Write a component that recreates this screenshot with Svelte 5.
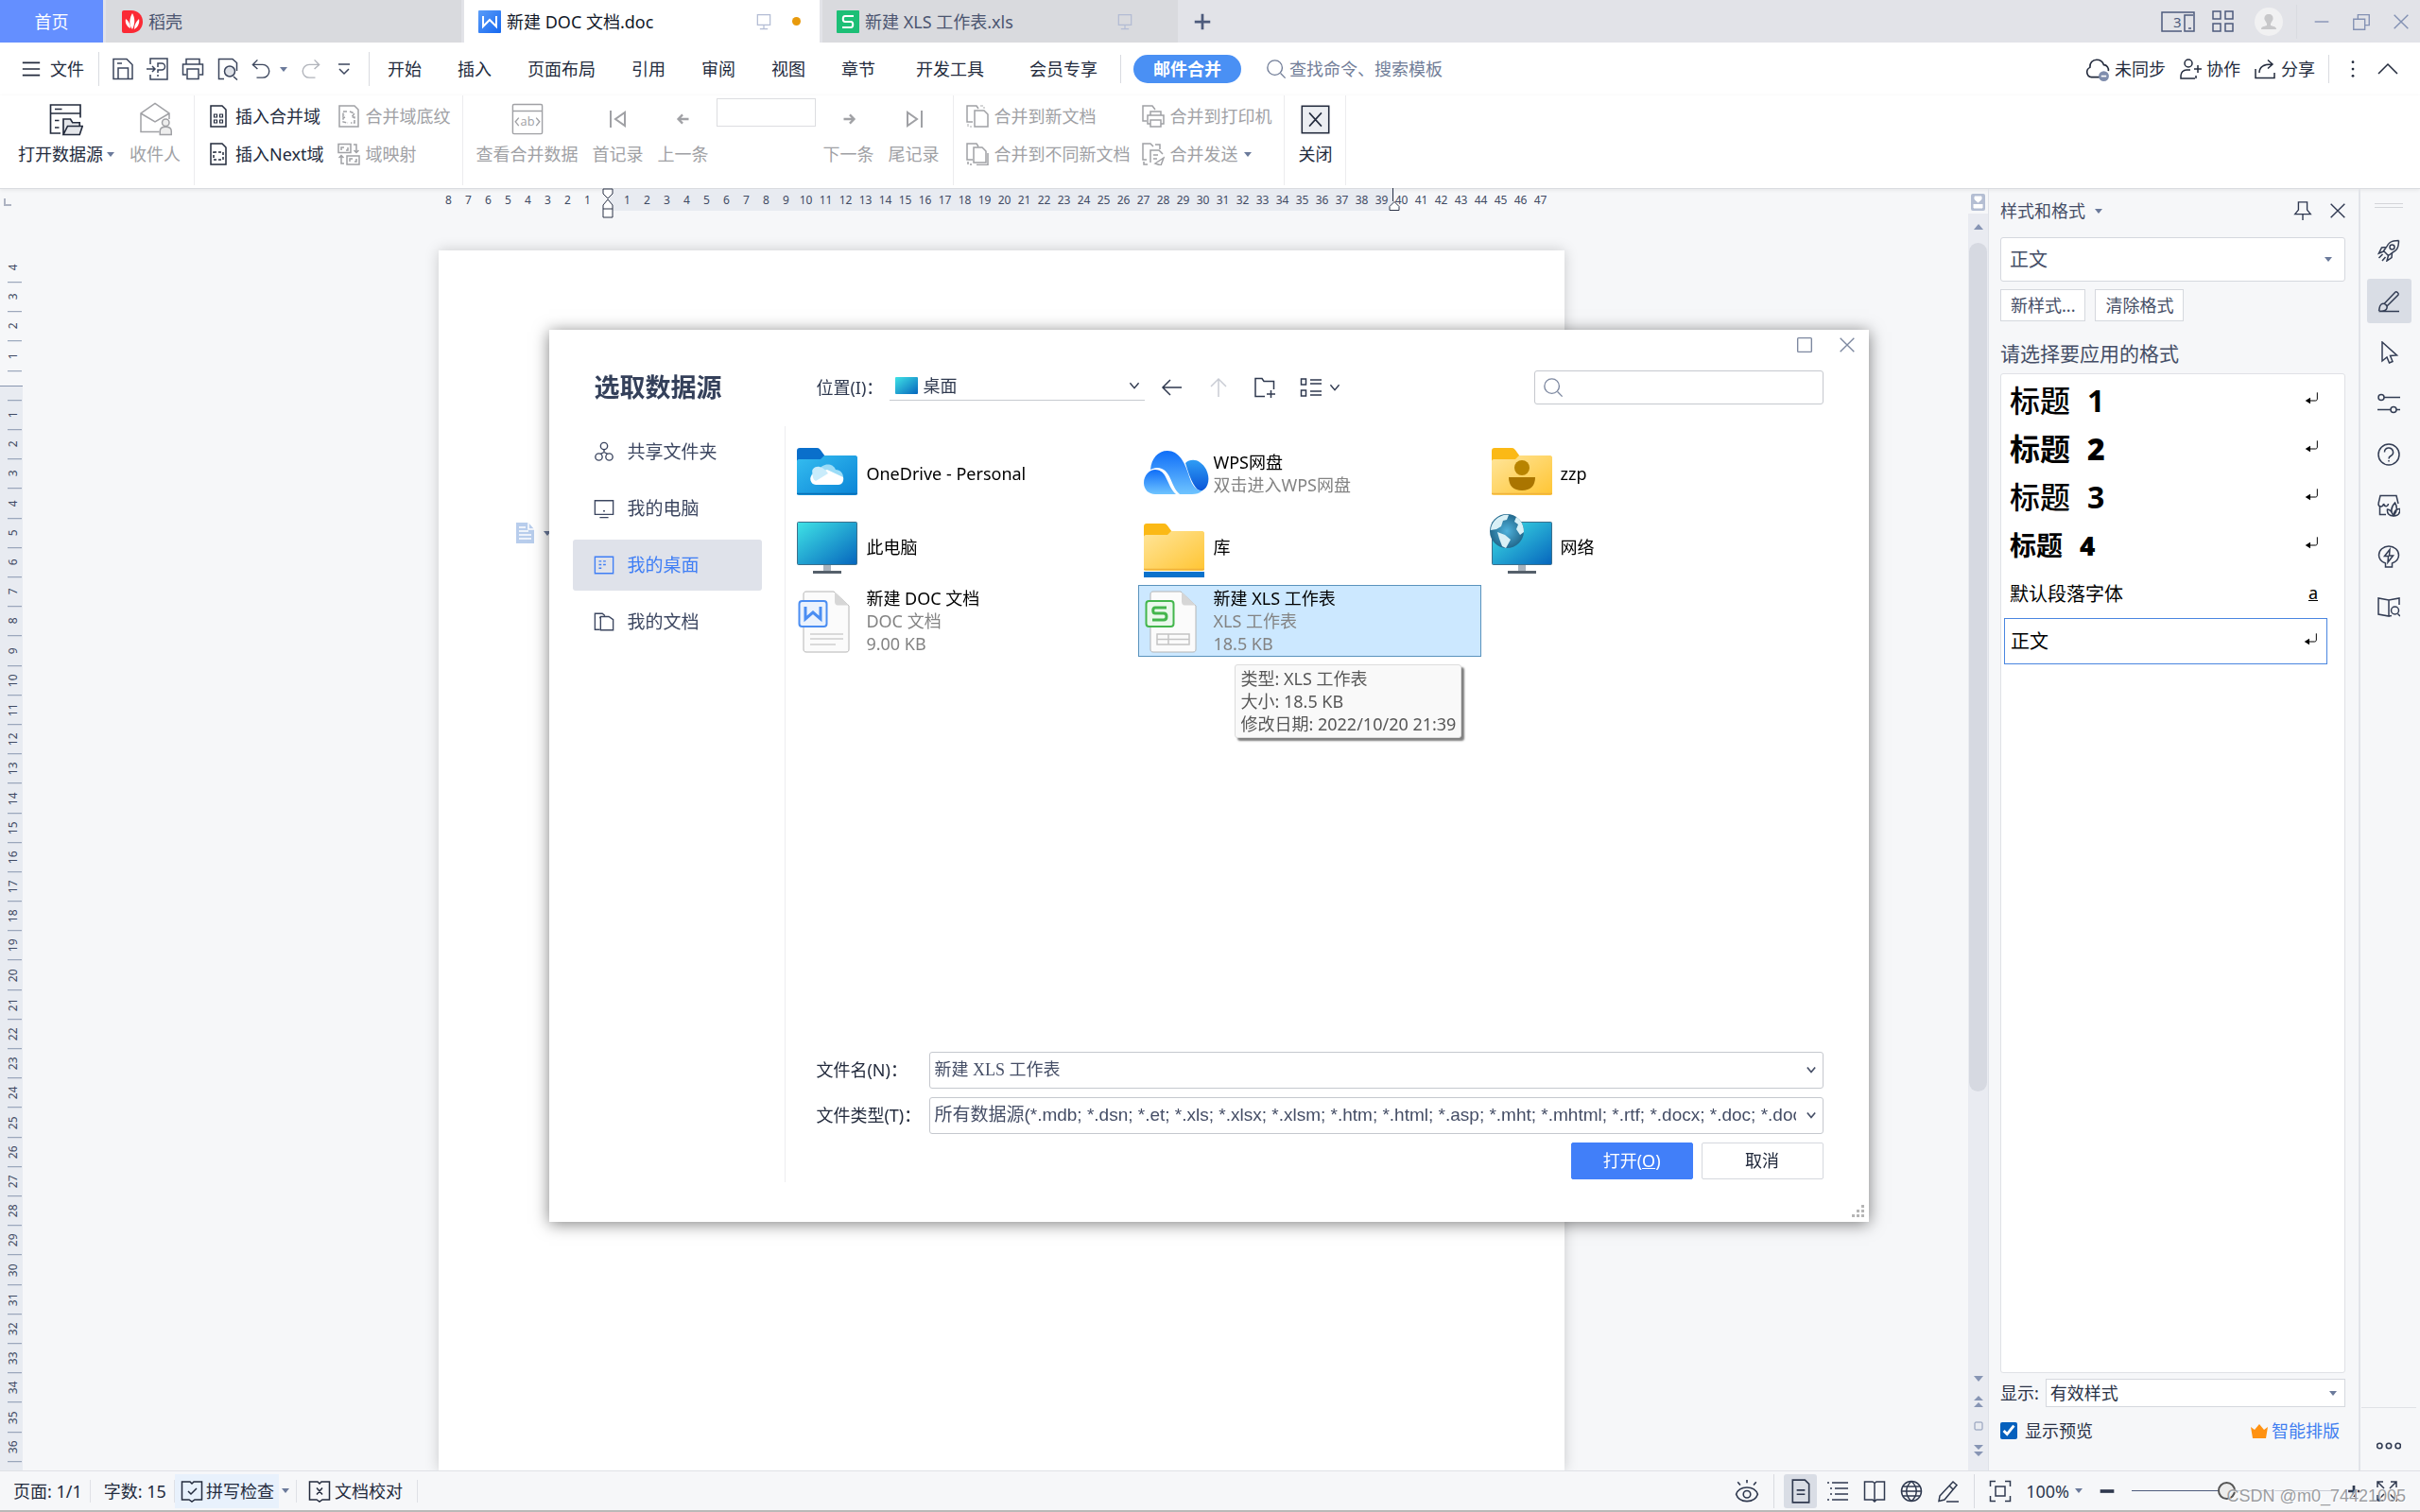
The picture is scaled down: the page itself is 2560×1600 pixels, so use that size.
<script lang="ts">
	type FileItem = {
		name: string;
		icon: string;
		lines?: string[];
		selected?: boolean;
	};

	const leftNav = ['开始', '插入', '页面布局', '引用', '审阅', '视图', '章节'];
	const wideNav = ['开发工具', '会员专享'];

	const hTicks = Array.from({ length: 56 }, (_, i) => i - 8);
	const vTicks = Array.from({ length: 41 }, (_, i) => i - 4);

	const places = [
		{ label: '共享文件夹', icon: 'share3' },
		{ label: '我的电脑', icon: 'monitor' },
		{ label: '我的桌面', icon: 'desktop' },
		{ label: '我的文档', icon: 'docs' }
	];
	let place = $state('我的桌面');

	const files: FileItem[] = [
		{ name: 'OneDrive - Personal', icon: 'onedrive' },
		{ name: 'WPS网盘', icon: 'wps', lines: ['双击进入WPS网盘'] },
		{ name: 'zzp', icon: 'user' },
		{ name: '此电脑', icon: 'pc' },
		{ name: '库', icon: 'library' },
		{ name: '网络', icon: 'network' },
		{ name: '新建 DOC 文档', icon: 'doc', lines: ['DOC 文档', '9.00 KB'] },
		{ name: '新建 XLS 工作表', icon: 'xls', lines: ['XLS 工作表', '18.5 KB'], selected: true }
	];

	const styles = [
		{ label: '标题', num: '1', cls: 'h1' },
		{ label: '标题', num: '2', cls: 'h2' },
		{ label: '标题', num: '3', cls: 'h3' },
		{ label: '标题', num: '4', cls: 'h4' },
		{ label: '默认段落字体', num: '', cls: 'plain' },
		{ label: '正文', num: '', cls: 'plain current' }
	];

	const rail = ['rocket', 'brush', 'cursor', 'sliders', 'help', 'store', 'bulb', 'bookfind'];

	let fileName = $state('新建 XLS 工作表');
	let preview = $state(true);
	let zoom = $state(47);

	const page = '<path d="M4 1h12l4 4v18H4z"/>';

	const icons: Record<string, string> = {
		menu: '<path d="M1 4h22M1 12h22M1 20h22"/>',
		save: '<path d="M2 1.500h14l6 6v15H2zM7 22V11h10.500v11M6 6h5"/>',
		export: '<path d="M4 7V1h18v22H4v-5M0 12h9M6 9l3 3-3 3M12 16v-3h4a3.500 3.500 0 0 0 0-7h-4v4M12 18v2"/>',
		print: '<path d="M5 7V1.500h14V7M5 18H1.500V7h21v11H19M6 12h12v10.500H6z"/>',
		preview: '<path d="M8 22.500H2.500v-21H17l4.500 4V14M18 20l4 3.500"/><circle cx="14" cy="14.500" r="5.500" fill="#dfe2e8"/>',
		undo: '<path d="M7 1.500L1.500 7 7 12M2 7h11a7.500 7.500 0 0 1 0 15H6"/>',
		redo: '<path d="M17 1.500L22.500 7 17 12M22 7H11a7.500 7.500 0 0 0 0 15h7"/>',
		more: '<path d="M6 7h12M7 12l5 5 5-5"/>',
		search: '<circle cx="10.500" cy="10.500" r="8.500"/><path d="M17 17l5.500 5.500"/>',
		cloud: '<path d="M14 20H6a5 5 0 0 1-1.500-9.500C4 6 7 3 11 3c4 0 6 2 7 5 3 0 5 3 4.500 6"/><circle cx="18" cy="19" r="5" fill="#7f8dad" stroke="none"/><path d="M15.500 19h5" stroke="#fff"/>',
		person: '<circle cx="10" cy="6" r="4"/><path d="M17 22H2v-3a6 6 0 0 1 6-6h4M18 22v-3M20 8v8M16 12h8"/>',
		share: '<path d="M2 12v9.500h20V16M6 16c0-6 4-9 13-9M15 2.500L20 7l-5 4.500"/>',
		dots: '<g fill="currentColor" stroke="none"><circle cx="12" cy="4" r="1.500"/><circle cx="12" cy="12" r="1.500"/><circle cx="12" cy="20" r="1.500"/></g>',
		up: '<path d="M2 17L12 7l10 10"/>',
		chevron: '<path d="M7 9l5 6 5-6"/>',
		close: '<path d="M4 4l16 16M20 4L4 20"/>',
		min: '<path d="M4 12h16"/>',
		restore: '<path d="M3 9h13v12H3zM8 9V4h13v12h-5"/>',
		max: '<rect x="4" y="4" width="16" height="16" rx="1"/>',
		present: '<path d="M4 3h16v13H4zM12 16v5M7 21h10"/>',
		grid: '<path d="M1 1h8v8H1zM14 1h8v8h-8zM1 14h8v8H1zM14 14h8v8h-8z"/>',
		plus: '<path d="M12 3v18M3 12h18"/>',
		datasource: '<path d="M8 22H1V2h21v9M1 8h21M4 5h5M4 13h3M4 18h3"/><path d="M10 23V12h5l1.500 2.500h5V17M10 23l3-6h10.500l-2 6z" fill="#e4e6ea"/>',
		recipient: '<path d="M15 21H2V8l10-7 10 7v4M2 8l10 6 10-6"/><circle cx="19.500" cy="14.500" r="2.500" fill="#eee"/><path d="M15.500 23v-2.500c0-2 1.500-3 4-3s4 1 4 3V23z" fill="#eee"/>',
		mergefield: page + '<path d="M7.500 10h3v3h-3zM13.500 10h3v3h-3zM7.500 16h3v3h-3zM13.500 16h3v3h-3z" stroke-width="1.200"/>',
		nextfield: page + '<path d="M7 10h10v8H7z" stroke-dasharray="3 2"/>',
		shading: '<path d="M2 1h16l4 4v18H2z"/><path d="M10 7H6v5l2-1M8 13l-2 1v4l5 1M13 7l5 2-3 4h3v6h-4" stroke-dasharray="4 1.500"/>',
		mapping: '<path d="M1 1.500h13v9H1zM4 8V5h3M9 8h2V5M10 14h13v9H10zM13 20v-3h3M18 20h2v-3M17 2h3v8M17.500 8l2.500 2.500L22.500 8M7 22H4v-8M1.500 16L4 13.500 6.500 16"/>',
		viewdata: '<rect x="1" y="1" width="22" height="22" rx="1"/><path d="M1 6h22"/><path d="M5.500 11L3 14l2.500 3M18.500 11l2.500 3-2.500 3" stroke-width="1"/><text x="12" y="17" font-size="9" text-anchor="middle" font-family="Open Sans" fill="currentColor" stroke="none">ab</text>',
		first: '<path d="M4 3v18M19 5v14L9 12z"/>',
		last: '<path d="M20 3v18M5 5v14l10-7z"/>',
		prev: '<path d="M18 12H7M11 7l-5 5 5 5" stroke-width="2.500"/>',
		next: '<path d="M6 12h11M13 7l5 5-5 5" stroke-width="2.500"/>',
		mergedoc: '<path d="M7 18H1V1h10l2 3M9 6h10l4 4v13H9z"/><path d="M15 1h4v3M2 20v3h4" stroke-dasharray="3 2" opacity=".6"/>',
		mergediff: '<path d="M7 18H1V1h10l2 3M8 5h9l4 4v12H8zM23 11v12.500H11"/><path d="M2 20v3h4" stroke-dasharray="3 2"/>',
		mergeprint: '<path d="M5 17H1V1h10l3 4M9 11V7h11v4M9 20H6v-9h17v9h-3M9 16h11v7H9z"/>',
		mergesend: '<path d="M5 18H1V1h8l3 3M14 2h5v5M9 21V8h9l4 4M2 20v3h4M12 13h5M12 17h4M14 22l9-6-3 8z"/>',
		closebox: '<rect x="1" y="1" width="22" height="22" fill="#eceef2"/><path d="M7 6.500l10 11M17 6.500l-10 11"/>',
		pin: '<path d="M7 2h10v9l4 5H3l4-5zM12 16v7"/>',
		rocket: '<path d="M22.500 1.500c-9 0-11 3-13 7l-5 .500-3 6 5-2M9.500 8.500l-3 4 5 5 4-3M22.500 1.500c0 9-3 11-7 13l-.500 5-5 3.500 1.500-5.500M5.500 16l-4 4M8.500 19l-3.500 4"/><circle cx="15.500" cy="8.500" r="2.500"/>',
		brush: '<path d="M1.500 22.500H23M1.500 22c1-3 0-5 2.500-7 3-2 7 1 6 4s-5 3.500-8.500 3M7.500 14L19 2c1-1 4 1.500 3 3L10 17"/>',
		cursor: '<path d="M5 1v20l5-4 2.500 6 3.500-1.500-2.500-6 7-.500z"/>',
		sliders: '<circle cx="4" cy="5.500" r="3"/><path d="M7 5.500h17M0 18.500h14M20 18.500h4"/><circle cx="17" cy="18.500" r="3"/>',
		help: '<circle cx="12" cy="12" r="11"/><path d="M7.500 9.500a4.500 4.500 0 1 1 6.500 4c-1.500.800-2 1.300-2 3M12 18v1.500"/>',
		store: '<path d="M2.500 13v8.500H9M1 10l2-8.500h17l2 8.500M1 10c0 4 5 4 5.500 0 1 3.500 4.500 3.500 5 0M17 23c-3-4-3-9 1.500-14 3 5 2 10-1.500 14zM17 23c-5 0-7-3-6.500-7 3 0 5 3 6.500 7zM17 23c0-5 3-8 7-7.500 0 5-3 7.500-7 7.500z"/>',
		bulb: '<path d="M8.500 19v4h7v-4c4-1.500 7-4.500 7-8.500a10.500 9.500 0 0 0-21 0c0 4 3 7 7 8.500zM13 4.500l-5.500 7h4L11 18l5.500-7h-4z"/>',
		bookfind: '<path d="M12 4v17L1 19V2l11 2 11-2v7M12 21l3-.500"/><circle cx="18.500" cy="15" r="4"/><path d="M21.500 18.500L24 21"/>',
		share3: '<circle cx="12" cy="5.500" r="4"/><circle cx="6" cy="18" r="4"/><circle cx="18" cy="18" r="4"/><path d="M12 9.500v3M8 14.500l4-2 4 2"/>',
		monitor: '<path d="M1.500 3h21v16h-21zM7 22.500h10M11 15h2"/>',
		desktop: '<path d="M1.500 2.500h21v19h-21zM6 7.500h3M11 7.500h3M6 11.500h3M11 11.500h3M6 15.500h3"/>',
		docs: '<path d="M7 21H1.500V2.500H10L13 5M8 6h7.500v0h2l5 3.500v12H8zM8 6l-1 2"/>',
		back: '<path d="M22 12H3M10 4l-8 8 8 8"/>',
		arrowup: '<path d="M12 22V3M4 11l8-8 8 8"/>',
		newfolder: '<path d="M12 21.500H2v-19h7l2 3h10.500V14M14 19h9M18.500 15v8"/>',
		view: '<path d="M1.500 3h5v6h-5zM1.500 15h5v6h-5zM11 4h12M11 8h12M11 16h12M11 20h12"/>',
		spell: '<path d="M1.500 2H10l2 2 2-2h8.500v19H15l-3 2-3-2H1.500zM8 12l3 3 6-6"/>',
		proof: '<path d="M1.500 2H10l2 2 2-2h8.500v19H15l-3 2-3-2H1.500zM9 8.500l6 7M15 8.500l-6 7"/>',
		eye: '<path d="M1.500 15c3-9 18-9 21 0-3 9-18 9-21 0zM12 1v3M3 3l2.500 3M21 3l-2.500 3"/><circle cx="12" cy="15" r="3.500"/>',
		pageview: page + '<path d="M8 11h8M8 15h8"/>',
		outline: '<path d="M1 3h2M6 3h17M4 9h2M9 9h14M4 15h2M9 15h14M1 21h2M6 21h17"/>',
		book: '<path d="M12 3.500V23M12 3.500L10 2H1.500v19H10l2 2 2-2h8.500V2H14z"/>',
		globe: '<circle cx="12" cy="12" r="10.500"/><path d="M1.500 12h21M3 7h18M3 17h18M12 1.500c-7 6-7 15 0 21M12 1.500c7 6 7 15 0 21"/>',
		pen: '<path d="M3 17L17 2l4 3.500L8 21l-6 1.500zM13 6l4 4M10 23h13"/>',
		fit: '<path d="M1.500 7V1.500H7M17 1.500h5.500V7M22.500 17v5.500H17M7 22.500H1.500V17M7 7h10v10H7z"/>',
		full: '<path d="M2 8V2h6M16 2h6v6M22 16v6h-6M8 22H2v-6M2 2l7 7M22 2l-7 7M22 22l-7-7M2 22l7-7"/>',
		return: '<path d="M20 2v10c0 2-1 3-3 3H6" stroke-width="1.500"/><path d="M1 15l8-5v10z" fill="currentColor" stroke="none"/>',
		rdots: '<circle cx="3" cy="12" r="2.500"/><circle cx="12" cy="12" r="2.500"/><circle cx="21" cy="12" r="2.500"/>'
	};

	const folder = (c: string) =>
		`<path d="M0 8a3 3 0 0 1 3-3h18c3 0 4 2 6 5l3 4v8H0z" fill="${c === 'blue' ? '#0a6fcb' : '#fbb916'}"/>` +
		`<path d="M0 19c0-1 1-2 2-2h23l4-4h33c1 0 2 1 2 2v38c0 1-1 2-2 2H2c-1 0-2-1-2-2z" fill="url(#${c})"/>` +
		`<path d="M0 53.500h64" stroke="${c === 'blue' ? '#0a6fb5' : '#f0b23c'}" stroke-width="1.500"/>`;
	const pc =
		'<path d="M28 51h8v8h-8z" fill="#a9b3bd"/><path d="M17 57h30v3H17z" fill="#55606b"/>' +
		'<rect x=".5" y="5.500" width="63" height="45" rx="1" fill="url(#screen)" stroke="#3b6f8c"/>';
	const sheet =
		'<path d="M10 1h29l16 15v46c0 2-1 3-3 3H10c-2 0-3-1-3-3V4c0-2 1-3 3-3z" fill="#fbfbfb" stroke="#b4b4b4"/>' +
		'<path d="M40 1.500v10c0 2 1 4 3 4h12z" fill="#d6d6d6"/>';

	const art: Record<string, string> = {
		onedrive:
			folder('blue') +
			'<path d="M15 36c0-4 3-7 8-7 3-8 15-9 18-1 5 0 8 4 8 8z" fill="#9bdcf7"/><path d="M20 44a6 6 0 0 1-3-11l15-5 17 8c1 5-2 8-5 8z" fill="#fff"/><path d="M17 33c-3-6 3-9 7-8 4 1 7 4 9 7l-13 8c-2-1-4-4-3-7z" fill="#c9ecfb"/>',
		wps:
			'<path d="M44 21c4-4 11-4 15-1 12 8 12 26 3 30-6 2-12-8-18-29z" fill="url(#leaf)"/><path d="M7 28C8 16 15 8 25 8c12 0 18 12 22 24 3 10 7 19 15 18-3 3-7 4-11 4H38C28 46 29 26 14 26c-3 0-5 1-7 2z" fill="url(#cloud)"/><path d="M0 42c0-8 6-14 12-14 13 0 12 17 22 26H12C5 54 0 49 0 42z" fill="url(#cloud)"/>',
		user: folder('yellow') + '<circle cx="32" cy="26" r="8" fill="#b88400"/><path d="M18 36h28c0 9-5 14-14 14s-14-5-14-14z" fill="#aa7500"/>',
		pc,
		library: `<g transform="translate(0 2)">${folder('yellow')}</g><path d="M0 58h64v6H0z" fill="#0b72cc"/>`,
		network:
			pc +
			'<circle cx="16" cy="15" r="18" fill="url(#earth)"/><path d="M4 3c4-4 10-6 14-5l-2 5-4 1-2 6-5 3-6 1c0-4 2-8 5-11zM26 0c5 3 8 9 8 16l-4 3-4-6 2-5-4-3zM6 16l8 3 6 5-5 9-4-2-3-8z" fill="#d9f0f6"/>',
		doc:
			sheet +
			'<rect x="2.500" y="11" width="29" height="27" rx="3" fill="#eaf2fd" stroke="#4a8df2" stroke-width="2"/><path d="M9 17v13l8-7 8 7V17" fill="none" stroke="#4a8df2" stroke-width="3"/><path d="M14 46h35M14 51h35M14 57h27" stroke="#cfcfcf" stroke-width="1.500"/>',
		xls:
			sheet +
			'<rect x="2.500" y="11" width="29" height="27" rx="3" fill="#eaf8ec" stroke="#43b64c" stroke-width="2"/><path d="M24 18H12c-3 0-3 6 0 6h9c4 0 4 7 0 7H9" fill="none" stroke="#43b64c" stroke-width="3"/><path d="M14 46h34v11H14zM14 51.500h34M26 46v11" fill="none" stroke="#c4c4c4" stroke-width="1.500"/>'
	};
</script>

{#snippet icon(name: string, size = 24, weight = 1.5)}
	<svg
		class="icon"
		viewBox="0 0 24 24"
		width={size}
		height={size}
		fill="none"
		stroke="currentColor"
		stroke-width={weight}
		aria-hidden="true">{@html icons[name]}</svg
	>
{/snippet}

{#snippet caret()}
	<svg class="caret" viewBox="0 0 8 5" width="8" height="5" aria-hidden="true"><path d="M0 0h8L4 5z" /></svg>
{/snippet}

<svg class="defs" width="0" height="0" aria-hidden="true">
	<defs>
		<linearGradient id="blue" x2="1" y2="1"><stop stop-color="#35bdf0" /><stop offset="1" stop-color="#0a84d6" /></linearGradient>
		<linearGradient id="yellow" x2="1" y2="1"><stop stop-color="#ffe59a" /><stop offset="1" stop-color="#ffc533" /></linearGradient>
		<linearGradient id="screen" x2="1" y2="1"><stop stop-color="#3fe3e6" /><stop offset="1" stop-color="#0665bd" /></linearGradient>
		<linearGradient id="cloud" x2="0" y2="1"><stop stop-color="#0f6ef8" /><stop offset="1" stop-color="#6fc4ff" /></linearGradient>
		<linearGradient id="leaf" x2="0" y2="1"><stop stop-color="#2f9df5" /><stop offset="1" stop-color="#0a55d8" /></linearGradient>
		<radialGradient id="earth"><stop stop-color="#4fb2dc" /><stop offset="1" stop-color="#23698d" /></radialGradient>
		<linearGradient id="wlogo" x2="1" y2="1"><stop stop-color="#5b9df8" /><stop offset="1" stop-color="#1668f0" /></linearGradient>
	</defs>
</svg>

<div class="app">
	<header class="tabs">
		<button class="tab home">首页</button>
		<button class="tab store">
			<svg width="22" height="24" viewBox="0 0 22 24"><path d="M0 2a2 2 0 0 1 2-2h8c7 0 12 5 12 12s-5 12-12 12H2a2 2 0 0 1-2-2z" fill="#fb2a35" /><path d="M11 3c3 5 3 11 0 17-4-5-3-12 0-17zM4 9c3 2 5 6 5 10-4-2-6-6-5-10zM18 9c1 4-1 9-5 11 0-5 2-8 5-11z" fill="#fff" /></svg>
			<span>稻壳</span>
		</button>
		<button class="tab active">
			<svg width="24" height="24" viewBox="0 0 24 24"><rect width="24" height="24" rx="1" fill="url(#wlogo)" /><path d="M5 6v11l7-7 7 7V6" fill="none" stroke="#fff" stroke-width="2" /></svg>
			<span>新建 DOC 文档.doc</span>
			<i class="tab-end">{@render icon('present', 20)}<b class="unsaved"></b></i>
		</button>
		<button class="tab other">
			<svg width="24" height="24" viewBox="0 0 24 24"><rect width="24" height="24" rx="1" fill="#1cbf76" /><path d="M18 6H9c-3 0-3 6 0 6h6c3 0 3 6 0 6H6" fill="none" stroke="#fff" stroke-width="2" /></svg>
			<span>新建 XLS 工作表.xls</span>
			<i class="tab-end">{@render icon('present', 20)}</i>
		</button>
		<button class="add" aria-label="新建">{@render icon('plus', 22, 3)}</button>
		<div class="window">
			<button aria-label="窗口"><svg width="36" height="22" viewBox="0 0 36 22" fill="none" stroke="currentColor" stroke-width="1.5"><path d="M22 21H1V1h34v20h-10V4h9M29 18h3" /><text x="13" y="17" font-size="15" font-family="Noto Sans" fill="currentColor" stroke="none">3</text></svg></button>
			<button aria-label="应用">{@render icon('grid', 24)}</button>
			<button class="avatar" aria-label="账号"><svg width="30" height="30" viewBox="0 0 30 30"><circle cx="15" cy="15" r="15" fill="#f1f1f2" /><path d="M15 7c3 0 5 2 4.500 5.500L17 17v2c3 1 6 1 6 4H7c0-3 3-3 6-4v-2l-2.500-4.500C10 9 12 7 15 7z" fill="#c8c8ca" /></svg></button>
			<span class="sep"></span>
			<button class="sys" aria-label="最小化">{@render icon('min', 22)}</button>
			<button class="sys" aria-label="还原">{@render icon('restore', 22)}</button>
			<button class="sys" aria-label="关闭">{@render icon('close', 22)}</button>
		</div>
	</header>

	<nav class="menu">
		<button class="file">{@render icon('menu', 20, 2)}<span>文件</span></button>
		<span class="sep"></span>
		<div class="quick">
			<button aria-label="保存">{@render icon('save')}</button>
			<button aria-label="输出">{@render icon('export')}</button>
			<button aria-label="打印">{@render icon('print')}</button>
			<button aria-label="打印预览">{@render icon('preview')}</button>
			<button class="undo" aria-label="撤销">{@render icon('undo', 22)}{@render caret()}</button>
			<button class="muted" aria-label="恢复">{@render icon('redo', 22)}</button>
			<button aria-label="更多">{@render icon('more')}</button>
		</div>
		<span class="sep"></span>
		{#each leftNav as item}
			<button class="nav">{item}</button>
		{/each}
		{#each wideNav as item}
			<button class="nav wide">{item}</button>
		{/each}
		<span class="sep short"></span>
		<button class="pill">邮件合并</button>
		<button class="find">{@render icon('search', 22)}<span>查找命令、搜索模板</span></button>
		<div class="menu-right">
			<button>{@render icon('cloud', 26)}<span>未同步</span></button>
			<button>{@render icon('person')}<span>协作</span></button>
			<button>{@render icon('share')}<span>分享</span></button>
			<span class="sep short"></span>
			<button aria-label="更多">{@render icon('dots', 22)}</button>
			<button aria-label="收起">{@render icon('up')}</button>
		</div>
	</nav>

	<div class="ribbon">
		<div class="group first">
			<button class="big">{@render icon('datasource', 36, 1.1)}<span class="with-caret">打开数据源{@render caret()}</span></button>
			<button class="big muted">{@render icon('recipient', 36, 1)}<span>收件人</span></button>
		</div>
		<div class="group pairs">
			<button>{@render icon('mergefield')}<span>插入合并域</span></button>
			<button class="muted">{@render icon('shading')}<span>合并域底纹</span></button>
			<button>{@render icon('nextfield')}<span>插入Next域</span></button>
			<button class="muted">{@render icon('mapping')}<span>域映射</span></button>
		</div>
		<div class="group records">
			<button class="big muted">{@render icon('viewdata', 34, 1)}<span>查看合并数据</span></button>
			<button class="big muted">{@render icon('first', 24, 2)}<span>首记录</span></button>
			<button class="big muted">{@render icon('prev', 22)}<span>上一条</span></button>
			<input class="record" aria-label="记录" />
			<button class="big muted">{@render icon('next', 22)}<span>下一条</span></button>
			<button class="big muted">{@render icon('last', 24, 2)}<span>尾记录</span></button>
		</div>
		<div class="group pairs merge">
			<button class="muted">{@render icon('mergedoc')}<span>合并到新文档</span></button>
			<button class="muted">{@render icon('mergeprint')}<span>合并到打印机</span></button>
			<button class="muted">{@render icon('mergediff')}<span>合并到不同新文档</span></button>
			<button class="muted">{@render icon('mergesend')}<span>合并发送</span>{@render caret()}</button>
		</div>
		<div class="group last">
			<button class="big">{@render icon('closebox', 31, 1.2)}<span>关闭</span></button>
		</div>
	</div>

	<div class="workspace">
		<div class="vruler">
			<svg class="corner" width="8" height="8" viewBox="0 0 8 8"><path d="M1 0v7h7" /></svg>
			{#each vTicks as n}
				<span>{n === 0 ? '' : Math.abs(n)}</span>
			{/each}
		</div>

		<div class="canvas">
			<div class="hruler">
				{#each hTicks as n}
					<span>{n === 0 ? '' : Math.abs(n)}</span>
				{/each}
				<svg class="indent" width="14" height="32" viewBox="0 0 14 32"><path d="M2 1h10v5l-5 5-5-5zM2 31h10V18l-5-6-5 6zM2 22h10" /></svg>
				<svg class="indent right" width="14" height="32" viewBox="0 0 14 32"><path d="M5.500 0v14M2 23.500h10v-4l-5-5-5 5z" /></svg>
			</div>
			<main class="paper">
				<button class="smart" aria-label="段落">
					<svg width="20" height="22" viewBox="0 0 20 22"><path d="M0 0h13l6 7v15H0z" fill="#b8cdec" /><path d="M13 0v7h6M3 5h7M3 9h10M3 13h13M3 17h13" fill="none" stroke="#fff" stroke-width="1.500" /></svg>
					{@render caret()}
				</button>
			</main>
		</div>

		<div class="scroll">
			<svg class="ruler-toggle" width="15" height="18" viewBox="0 0 15 18"><rect width="15" height="18" rx="2" fill="#b4bed3" /><path d="M4 3h7v3l-3.500 3L4 6zM3 11v4h9v-4M6 12v3M9 12v3" fill="#fff" stroke="#fff" /></svg>
			<div class="track">
				<svg width="10" height="6" viewBox="0 0 10 6"><path d="M0 6h10L5 0z" /></svg>
				<div class="thumb"></div>
				<svg width="10" height="6" viewBox="0 0 10 6"><path d="M0 0h10L5 6z" /></svg>
				<svg width="10" height="12" viewBox="0 0 10 12"><path d="M0 5h10L5 0zM0 12h10L5 7z" /></svg>
				<svg class="hollow" width="10" height="10" viewBox="0 0 10 10"><rect x="1" y="1" width="8" height="8" rx="1" /></svg>
				<svg width="10" height="12" viewBox="0 0 10 12"><path d="M0 0h10L5 5zM0 7h10l-5 5z" /></svg>
			</div>
		</div>

		<aside class="panel">
			<header>
				<h2>样式和格式</h2>
				{@render caret()}
				<button class="pin" aria-label="固定">{@render icon('pin', 22)}</button>
				<button aria-label="关闭">{@render icon('close', 22)}</button>
			</header>
			<div class="pick">
				<select aria-label="当前样式"><option>正文</option></select>
				{@render caret()}
			</div>
			<div class="panel-buttons">
				<button>新样式...</button>
				<button>清除格式</button>
			</div>
			<p>请选择要应用的格式</p>
			<ul class="styles">
				{#each styles as s}
					<li class={s.cls}>
						<span>{s.label}{#if s.num}<b>{s.num}</b>{/if}</span>
						{#if s.label === '默认段落字体'}
							<u>a</u>
						{:else}
							{@render icon('return', 16)}
						{/if}
					</li>
				{/each}
			</ul>
			<div class="show">
				<label for="show">显示:</label>
				<div class="pick small">
					<select id="show"><option>有效样式</option></select>
					{@render caret()}
				</div>
			</div>
			<div class="panel-foot">
				<label><input type="checkbox" bind:checked={preview} />显示预览</label>
				<a href="#layout">
					<svg width="18" height="15" viewBox="0 0 18 15"><path d="M0 3l4 3 5-6 5 6 4-3-2 12H2z" fill="#ff9212" /></svg>
					智能排版
				</a>
			</div>
		</aside>

		<aside class="rail">
			<span class="handle"></span>
			{#each rail as name}
				<button class:on={name === 'brush'} aria-label={name}>{@render icon(name)}</button>
			{/each}
			<button class="rail-more" aria-label="更多">{@render icon('rdots', 26)}</button>
		</aside>
	</div>

	<footer class="status">
		<span class="cell">页面: 1/1</span>
		<span class="cell">字数: 15</span>
		<button class="spell">{@render icon('spell')}<span>拼写检查</span></button>
		{@render caret()}
		<button class="proof">{@render icon('proof')}<span>文档校对</span></button>
		<div class="status-right">
			<button aria-label="护眼模式">{@render icon('eye', 26)}</button>
			<span class="sep"></span>
			<button class="on" aria-label="页面视图">{@render icon('pageview', 26)}</button>
			<button aria-label="大纲">{@render icon('outline')}</button>
			<button aria-label="阅读版式">{@render icon('book')}</button>
			<button aria-label="Web版式">{@render icon('globe')}</button>
			<button aria-label="写作模式">{@render icon('pen')}</button>
			<span class="sep"></span>
			<button aria-label="最佳显示">{@render icon('fit')}</button>
			<button class="percent">100%{@render caret()}</button>
			<button class="minus" aria-label="缩小">{@render icon('min', 22, 4)}</button>
			<input type="range" aria-label="缩放" bind:value={zoom} />
			<button class="zoom-in" aria-label="放大">{@render icon('plus', 16, 4)}</button>
			<button aria-label="全屏">{@render icon('full')}</button>
		</div>
		<span class="mark">CSDN @m0_74421005</span>
	</footer>

	<div class="overlay">
		<div class="dialog" role="dialog" aria-label="选取数据源">
			<div class="dialog-window">
				<button aria-label="最大化">{@render icon('max', 22)}</button>
				<button aria-label="关闭">{@render icon('close', 22)}</button>
			</div>
			<div class="dialog-head">
				<h1>选取数据源</h1>
				<label for="location">位置(I)：</label>
				<div class="location">
					<svg width="24" height="18" viewBox="0 0 24 18"><rect width="24" height="18" rx="1" fill="url(#screen)" /></svg>
					<select id="location"><option>桌面</option></select>
					{@render icon('chevron', 22)}
				</div>
				<div class="tools">
					<button aria-label="后退">{@render icon('back')}</button>
					<button class="faint" aria-label="向上">{@render icon('arrowup')}</button>
					<button aria-label="新建文件夹">{@render icon('newfolder')}</button>
					<button class="view" aria-label="视图">{@render icon('view')}{@render icon('chevron', 22)}</button>
				</div>
				<label class="search">{@render icon('search', 22)}<input aria-label="搜索" /></label>
			</div>
			<div class="dialog-body">
				<nav class="places">
					{#each places as p}
						<button class:on={place === p.label} onclick={() => (place = p.label)}>
							{@render icon(p.icon, 22)}<span>{p.label}</span>
						</button>
					{/each}
				</nav>
				<div class="content">
					<div class="files">
						{#each files as f}
							<button class="entry" class:selected={f.selected}>
								<svg width="64" height="64" viewBox="0 0 64 64" overflow="visible" aria-hidden="true">{@html art[f.icon]}</svg>
								<span class="entry-text">
									<span>{f.name}</span>
									{#each f.lines ?? [] as line}
										<small>{line}</small>
									{/each}
								</span>
								{#if f.selected}
									<span class="tip" role="tooltip">
										<span>类型: XLS 工作表</span>
										<span>大小: 18.5 KB</span>
										<span>修改日期: 2022/10/20 21:39</span>
									</span>
								{/if}
							</button>
						{/each}
					</div>
					<div class="fields">
						<label for="name">文件名(N)：</label>
						<div class="field">
							<input id="name" bind:value={fileName} />
							{@render icon('chevron', 20, 2)}
						</div>
						<label for="type">文件类型(T)：</label>
						<div class="field type">
							<select id="type"><option>所有数据源(*.mdb; *.dsn; *.et; *.xls; *.xlsx; *.xlsm; *.htm; *.html; *.asp; *.mht; *.mhtml; *.rtf; *.docx; *.doc; *.docm; *.dot)</option></select>
							{@render icon('chevron', 20, 2)}
						</div>
					</div>
					<div class="actions">
						<button class="primary">打开(<u>O</u>)</button>
						<button>取消</button>
					</div>
				</div>
			</div>
			<svg class="grip" width="14" height="14" viewBox="0 0 14 14"><path d="M10 0h3v3h-3zM5 5h3v3H5zM10 5h3v3h-3zM0 10h3v3H0zM5 10h3v3H5zM10 10h3v3h-3z" /></svg>
		</div>
	</div>
</div>

<style>
	:global(body) {
		font-family: 'Noto Sans', 'Noto Sans CJK SC', sans-serif;
		font-size: 18px;
		line-height: 24px;
		color: #232b3d;
	}

	button,
	input,
	select {
		font: inherit;
		color: inherit;
		margin: 0;
		padding: 0;
		border: none;
		background: none;
	}

	button {
		display: flex;
		align-items: center;
		justify-content: center;
		white-space: nowrap;
	}

	select {
		appearance: none;
		min-width: 0;
	}

	.defs {
		position: absolute;
	}

	.icon {
		flex-shrink: 0;
	}

	.caret {
		flex-shrink: 0;
		fill: #6b7a9b;
	}

	.sep {
		width: 1px;
		height: 36px;
		background: #d9dbe0;
	}

	.sep.short {
		height: 30px;
	}

	.muted {
		color: #a0a1a5;
	}

	.app {
		display: flex;
		flex-direction: column;
		box-sizing: border-box;
		min-height: 100vh;
		border-bottom: 2px solid #b9b8b8;
		background: #f6f7f9;
	}

	.tabs {
		display: flex;
		height: 45px;
		background: #e2e3e8;
		gap: 3px;
	}

	.tab {
		width: 376px;
		justify-content: flex-start;
		gap: 6px;
		background: #d9dade;
		color: #4b5570;
		padding-left: 15px;
		box-sizing: border-box;
	}

	.tab.home {
		width: 109px;
		padding: 0;
		justify-content: center;
		background: #648fff;
		color: #fff;
	}

	.tab.store {
		padding-left: 17px;
	}

	.tab.active {
		background: #fff;
		color: #111827;
	}

	.tab-end {
		display: flex;
		align-items: center;
		gap: 20px;
		margin-left: auto;
		padding-right: 46px;
		color: #b3bcd4;
	}

	.active .tab-end {
		padding-right: 20px;
	}

	.unsaved {
		width: 9px;
		height: 9px;
		border-radius: 50%;
		background: #e89a0c;
	}

	.add {
		margin-left: 12px;
		color: #4d5b7c;
	}

	.window {
		display: flex;
		align-items: center;
		gap: 18px;
		margin-left: auto;
		padding-right: 8px;
		color: #4d5b7c;
	}

	.window .sep {
		margin: 0 -4px;
	}

	.window .avatar {
		margin-left: 3px;
	}

	.sys {
		color: #8391b3;
		width: 24px;
	}

	.menu {
		display: flex;
		align-items: center;
		height: 56px;
		background: #fff;
	}

	.file {
		padding: 0 15px 0 23px;
		gap: 10px;
	}

	.quick {
		display: flex;
		gap: 13px;
		padding: 0 14px 0 13px;
		color: #3b455c;
	}

	.quick .muted {
		color: #b0b3ba;
	}

	.undo {
		gap: 8px;
	}

	.nav {
		padding: 0 19px;
	}

	.nav.wide {
		padding: 0 24px;
	}

	.pill {
		margin: 0 26px 0 13px;
		width: 114px;
		height: 30px;
		border-radius: 15px;
		background: #4a90f4;
		color: #fff;
		font-weight: 700;
	}

	.find {
		gap: 3px;
		color: #727e98;
	}

	.menu-right {
		display: flex;
		align-items: center;
		gap: 14px;
		margin-left: auto;
		padding-right: 22px;
	}

	.menu-right button {
		gap: 5px;
	}

	.ribbon {
		display: flex;
		height: 98px;
		background: #fff;
		border-bottom: 1px solid #d9dbdf;
		box-shadow: 0 1px 4px rgba(0, 0, 0, 0.08);
	}

	.group {
		display: flex;
		align-items: flex-start;
		gap: 15px;
		margin-bottom: 3px;
		border-right: 1px solid #ececee;
	}

	.group.first {
		padding: 0 14px 0 19px;
		gap: 16px;
	}

	.group.records {
		padding: 0 14px;
	}

	.group.last {
		padding: 0 13px 0 15px;
	}

	.big {
		display: grid;
		grid-template-rows: 50px 24px;
		place-items: center;
	}

	.with-caret {
		display: flex;
		align-items: center;
		gap: 4px;
	}

	.pairs {
		display: grid;
		grid-template-columns: auto auto;
		grid-template-rows: 24px 24px;
		gap: 16px;
		padding: 10px 12px 0 13px;
	}

	.pairs button {
		justify-content: flex-start;
		gap: 6px;
	}

	.pairs:not(.merge) {
		column-gap: 14px;
	}

	.pairs.merge {
		column-gap: 12px;
	}

	.record {
		width: 105px;
		height: 30px;
		box-sizing: border-box;
		margin: 3px -7px 0;
		border: 1px solid #dcdde0;
	}

	.workspace {
		display: flex;
		flex: 1;
	}

	.vruler {
		position: relative;
		display: grid;
		grid-auto-rows: 1fr;
		width: 24px;
		box-sizing: border-box;
		padding: 68px 1px 9px 8px;
		background: linear-gradient(transparent 208px, #8896af 208px, #8896af 209px, #e8ebf1 209px);
		font-size: 12px;
		line-height: 12px;
		color: #3f4a63;
	}

	.corner {
		position: absolute;
		left: 4px;
		top: 10px;
		fill: none;
		stroke: #adb3c2;
		stroke-width: 2;
	}

	.vruler span {
		display: flex;
		align-items: flex-end;
		justify-content: center;
		flex-direction: column;
		writing-mode: vertical-rl;
		transform: rotate(180deg);
		border-top: 1px solid #8896af;
	}

	.vruler span {
		display: block;
		text-align: center;
	}

	.canvas {
		display: flex;
		flex: 1;
		flex-direction: column;
		align-items: center;
		padding-left: 13px;
	}

	.hruler {
		position: relative;
		display: grid;
		grid-template-columns: repeat(56, 21px);
		width: 1191px;
		height: 23px;
		margin-bottom: 42px;
		background: linear-gradient(90deg, transparent 179px, #e8ebf1 179px, #e8ebf1 1011px, transparent 1011px);
		font-size: 12px;
		line-height: 23px;
		text-align: center;
		color: #3f4a63;
	}

	.indent {
		position: absolute;
		left: 172px;
		top: -1px;
		fill: #fff;
		stroke: #2b3347;
	}

	.indent.right {
		left: 1004px;
	}

	.paper {
		flex: 1;
		width: 1191px;
		background: #fff;
		box-shadow: 0 0 14px rgba(0, 0, 0, 0.18);
		clip-path: inset(-14px -14px 0 -14px);
	}

	.smart {
		gap: 9px;
		margin: 288px 0 0 82px;
	}

	.scroll {
		display: flex;
		flex-direction: column;
		width: 21px;
		border-right: 1px solid #dfe2e8;
	}

	.ruler-toggle {
		margin: 5px 3px 3px;
	}

	.track {
		display: flex;
		flex: 1;
		flex-direction: column;
		align-items: center;
		gap: 15px;
		padding: 11px 0 15px;
		background: #e9ebf1;
		fill: #8795b4;
	}

	.thumb {
		width: 19px;
		flex: 0 1 898px;
		margin: -1px 0 auto;
		border-radius: 10px;
		background: #d6d9e1;
	}

	.hollow {
		fill: none;
		stroke: #8795b4;
	}

	.panel {
		display: flex;
		flex-direction: column;
		width: 365px;
		padding: 0 14px 0 12px;
		border-right: 2px solid #e2e4e9;
		color: #454e66;
	}

	.panel header {
		display: flex;
		align-items: center;
		gap: 10px;
		height: 46px;
		margin-right: -3px;
		padding-bottom: 5px;
	}

	.panel header button {
		color: #2e3750;
	}

	.panel h2 {
		margin: 0;
		font-size: 18px;
		font-weight: 400;
	}

	.pin {
		margin: 0 5px 0 auto;
	}

	.pick {
		display: grid;
		align-items: center;
		height: 47px;
		box-sizing: border-box;
		border: 1px solid #d5d8de;
		border-radius: 3px;
		background: #fff;
	}

	.pick > :global(*) {
		grid-area: 1 / 1;
	}

	.pick select {
		padding: 0 9px;
		font-size: 20px;
		line-height: 28px;
	}

	.pick .caret {
		justify-self: end;
		margin-right: 13px;
		pointer-events: none;
	}

	.pick.small {
		flex: 1;
		height: 30px;
		border-radius: 0;
	}

	.pick.small select {
		padding: 0 4px;
		font-size: 18px;
	}

	.pick.small .caret {
		margin-right: 8px;
	}

	.panel-buttons {
		display: flex;
		gap: 10px;
		margin-top: 8px;
	}

	.panel-buttons button {
		height: 34px;
		padding: 0 10px;
		border: 1px solid #d5d8de;
		background: #fff;
		box-sizing: border-box;
	}

	.panel p {
		margin: 20px 0 6px;
		font-size: 21px;
		line-height: 29px;
	}

	.styles {
		flex: 1;
		margin: 0;
		padding: 3px 18px 0 3px;
		list-style: none;
		border: 1px solid #dfe1e6;
		border-radius: 3px;
		background: #fff;
		color: #000;
	}

	.styles li {
		display: flex;
		align-items: center;
		justify-content: space-between;
		height: 51px;
		padding: 0 8px 2px 6px;
		box-sizing: border-box;
		font-size: 32px;
		line-height: 40px;
	}

	.styles .icon,
	.styles u {
		margin-bottom: 4px;
	}

	.styles b {
		margin-left: 18px;
	}

	.styles .h1,
	.styles .h3 {
		font-weight: 500;
	}

	.styles .h2,
	.styles .h4 {
		font-weight: 700;
	}

	.styles .h4 {
		font-size: 28px;
	}

	.styles .plain {
		padding-bottom: 0;
		font-size: 20px;
	}

	.styles .current {
		height: 49px;
		border: 1px solid #4a86e0;
	}

	.styles u {
		font-size: 18px;
		padding-right: 2px;
	}

	.show {
		display: flex;
		align-items: center;
		gap: 7px;
		margin-top: 6px;
		color: #2a3246;
	}

	.panel-foot {
		display: flex;
		justify-content: space-between;
		align-items: center;
		padding: 13px 6px 30px 0;
		color: #2a3246;
	}

	.panel-foot label,
	.panel-foot a {
		display: flex;
		align-items: center;
		gap: 8px;
	}

	.panel-foot a {
		gap: 4px;
		color: #3f7ef0;
		text-decoration: none;
	}

	.panel-foot input {
		width: 18px;
		height: 18px;
		accent-color: #0560bd;
	}

	.rail {
		display: flex;
		flex-direction: column;
		align-items: center;
		width: 60px;
		padding-right: 3px;
		gap: 7px;
		color: #333d54;
	}

	.rail button {
		width: 47px;
		height: 47px;
		border-radius: 3px;
	}

	.rail button.on {
		background: #d9dde5;
	}

	.handle {
		width: 30px;
		height: 3px;
		margin: 15px 0 14px;
		border: solid #d3d5d9;
		border-width: 1px 0;
	}

	.rail .rail-more {
		width: 58px;
		height: 67px;
		padding-top: 14px;
		margin-top: auto;
		border-top: 1px solid #dfe1e6;
		border-radius: 0;
		box-sizing: border-box;
	}

	.status {
		position: relative;
		display: flex;
		align-items: center;
		height: 41px;
		border-top: 1px solid #dfe1e6;
	}

	.cell {
		padding: 0 8px 0 14px;
		border-right: 1px solid #dfe1e6;
	}

	.spell {
		height: 36px;
		margin-right: 3px;
		padding: 0 5px 0 6px;
		gap: 3px;
		background: #e8f1fc;
	}

	.proof {
		margin-left: 7px;
		padding: 0 15px 0 12px;
		gap: 4px;
		border-left: 1px solid #dfe1e6;
		border-right: 1px solid #dfe1e6;
	}

	.status-right {
		display: flex;
		align-items: center;
		gap: 15px;
		margin-left: auto;
		padding-right: 23px;
		color: #2f394f;
	}

	.status-right .on {
		width: 35px;
		height: 36px;
		margin: 0 -5px;
		border-radius: 3px;
		background: #d9dde5;
	}

	.percent {
		gap: 6px;
	}

	input[type='range'] {
		appearance: none;
		width: 212px;
		height: 20px;
		background: linear-gradient(#4d5b7c, #4d5b7c) left center / 94px 1px no-repeat,
			linear-gradient(#c9cdd6, #c9cdd6) center / 100% 1px no-repeat;
	}

	input[type='range']::-webkit-slider-thumb {
		appearance: none;
		width: 19px;
		height: 19px;
		border: 2px solid #555;
		border-radius: 50%;
		background: #ececec;
	}

	.mark {
		position: absolute;
		right: 15px;
		bottom: 3px;
		font-family: 'Liberation Sans', sans-serif;
		font-size: 18px;
		color: #9b9da1;
		text-shadow: 1px 1px 0 #fff;
		pointer-events: none;
	}

	.overlay {
		position: fixed;
		inset: 41px 2px 0 0;
		display: grid;
		place-items: center;
	}

	.dialog {
		position: relative;
		display: flex;
		flex-direction: column;
		width: 54.5vw;
		height: 59vh;
		background: #fff;
		box-shadow: 0 2px 16px rgba(0, 0, 0, 0.5);
	}

	.dialog-window {
		display: flex;
		justify-content: flex-end;
		gap: 23px;
		height: 32px;
		padding-right: 12px;
		color: #7d88a0;
	}

	.dialog-head {
		display: flex;
		align-items: center;
		height: 58px;
		padding: 0 48px 0 47px;
		color: #2f394f;
	}

	.dialog-head h1 {
		width: 235px;
		margin: 0;
		font-size: 27px;
		line-height: 36px;
		color: #34405a;
	}

	.dialog-head > label[for] {
		width: 78px;
		white-space: nowrap;
	}

	.location {
		display: flex;
		align-items: center;
		width: 264px;
		padding: 0 0 3px 6px;
		gap: 5px;
		border-bottom: 1px solid #c7cad0;
	}

	.location select {
		flex: 1;
	}

	.tools {
		display: flex;
		gap: 25px;
		margin-left: 17px;
	}

	.faint {
		color: #c9ccd4;
	}

	.search {
		display: flex;
		align-items: center;
		gap: 6px;
		width: 296px;
		height: 34px;
		margin-left: auto;
		padding: 0 0 0 8px;
		border: 1px solid #c5c8ce;
		border-radius: 3px;
		color: #7d88a0;
	}

	.search input {
		flex: 1;
		min-width: 0;
	}

	.view {
		gap: 2px;
	}

	.dialog-body {
		display: flex;
		flex: 1;
		margin-top: 12px;
	}

	.places {
		display: flex;
		flex-direction: column;
		gap: 6px;
		width: 200px;
		margin-bottom: 42px;
		padding: 0 24px 0 25px;
		border-right: 1px solid #ededf0;
		font-size: 19px;
		color: #3c4660;
	}

	.places button {
		height: 54px;
		padding-left: 22px;
		justify-content: flex-start;
		gap: 13px;
		border-radius: 3px;
	}

	.places .on {
		background: #dfe2ea;
		color: #3f7ef5;
	}

	.content {
		display: flex;
		flex: 1;
		flex-direction: column;
		min-width: 0;
		padding: 12px 48px 45px 6px;
	}

	.files {
		display: grid;
		grid-template-columns: repeat(3, 1fr);
		grid-auto-rows: 76px;
		gap: 2px 5px;
		margin: 0 -5px auto 0;
		color: #000;
	}

	.entry {
		position: relative;
		justify-content: flex-start;
		gap: 9px;
		padding-left: 5px;
		border: 1px solid transparent;
		text-align: left;
	}

	.entry.selected {
		border-color: #5a93bd;
		background: #cce8ff;
	}

	.entry-text,
	.tip {
		display: flex;
		flex-direction: column;
	}

	.entry small {
		font-size: 18px;
		color: #838383;
	}

	.tip {
		position: absolute;
		left: 101px;
		top: 83px;
		padding: 2px 5px;
		border: 1px solid #dcdcdc;
		border-radius: 3px;
		background: #f9f9f9;
		box-shadow: 3px 3px 2px rgba(0, 0, 0, 0.5);
		color: #575757;
	}

	.fields {
		display: grid;
		grid-template-columns: 120px 1fr;
		align-items: center;
		gap: 9px 0;
		margin-left: 26px;
		white-space: nowrap;
	}

	.field {
		display: flex;
		align-items: center;
		height: 39px;
		min-width: 0;
		box-sizing: border-box;
		padding: 0 2px 0 4px;
		border: 1px solid #c5c8ce;
		border-radius: 3px;
		color: #454e66;
	}

	.field input,
	.field select {
		flex: 1;
		min-width: 0;
		font-family: 'Liberation Serif', 'Noto Sans CJK SC', serif;
	}

	.field select {
		font-family: 'Liberation Sans', 'Noto Sans CJK SC', sans-serif;
		font-size: 19px;
		margin-right: 6px;
	}

	.actions {
		display: flex;
		justify-content: flex-end;
		gap: 9px;
		margin-top: 9px;
	}

	.actions button {
		display: block;
		width: 129px;
		height: 39px;
		border: 1px solid #d5d8de;
		border-radius: 2px;
	}

	.actions .primary {
		border-color: #417ff9;
		background: #417ff9;
		color: #fff;
	}

	.grip {
		position: absolute;
		right: 4px;
		bottom: 4px;
		fill: #b5b5b5;
	}
</style>
